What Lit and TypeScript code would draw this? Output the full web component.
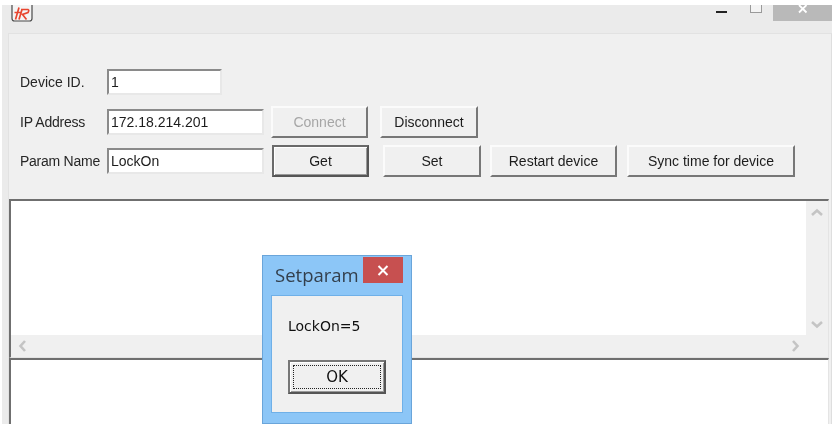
import { LitElement, html, css, svg } from "lit";
import { customElement } from "lit/decorators.js";

const chevron = (d: string) => svg`<svg class="chev" width="14" height="14" viewBox="0 0 14 14"><path d=${d} fill="none" stroke="#c4c4c4" stroke-width="2.6"/></svg>`;

@customElement("app-root")
export class AppRoot extends LitElement {
  static styles = css`
    :host { display: block; width: 840px; height: 435px; background: #fff; position: relative; overflow: hidden;
      font-family: "Liberation Sans", Arial, sans-serif; font-size: 14px; color: #222; }
    .window { margin: 5px 8px 0 2px; height: 419px; background: #ebebeb; display: flex; flex-direction: column; filter: blur(0.4px); }
    .titlebar { height: 28px; flex: none; display: flex; align-items: flex-start; box-sizing: border-box; padding-left: 9px; }
    .logo { flex: none; }
    .spacer { flex: 1; }
    .min { width: 11px; height: 2px; background: #222; margin-top: 6px; margin-right: 23px; }
    .max { width: 12px; height: 8px; box-sizing: border-box; border: 1px solid #9a9a9a; border-top: 0; background: #f4f4f4; margin-right: 11px; }
    .close { width: 59px; height: 16px; background: #b9b9b9; display: flex; justify-content: center; align-items: flex-start; }
    .panel { margin-left: 6px; flex: 1; min-height: 0; background: #f0f0f0; border: 1px solid #e2e2e2; border-right-color: #dedede; border-bottom: 0; display: flex; flex-direction: column; padding-top: 35px; box-sizing: border-box; }
    .form { padding: 0 0 0 11px; display: flex; flex-direction: column; gap: 7px; height: 108px; flex: none; }
    .row { display: flex; align-items: center; height: 32px; flex: none; }
    .row.first { height: 26px; margin-bottom: 4px; }
    .label { width: 87px; flex: none; color: #262626; white-space: nowrap; font-size: 14px; }
    .tight { letter-spacing: -0.25px; }
    .input { box-sizing: border-box; height: 26px; background: #fff; border: 2px solid #e8e8e8; border-top-color: #8a8a8a; border-left-color: #8a8a8a; padding-left: 2px; line-height: 22px; color: #1c1c1c; font-size: 14px; }
    .w115 { width: 115px; }
    .w157 { width: 157px; }
    .btn { box-sizing: border-box; height: 32px; flex: none; background: #f0f0f0; border: 2px solid; border-color: #fbfbfb #777 #777 #fbfbfb; display: flex; align-items: center; justify-content: center; color: #1c1c1c; font-size: 14px; }
    .btn.disabled { color: #a6a6a6; }
    .btn.default { border-color: #6a6a6a #555 #555 #6a6a6a; box-shadow: inset 1px 1px 0 #fff, inset -1px -1px 0 #999; }
    .ml-7 { margin-left: 7px; }
    .ml-8 { margin-left: 8px; }
    .ml-9 { margin-left: 9px; }
    .ml-10 { margin-left: 10px; }
    .ml-12 { margin-left: 12px; }
    .ml-14 { margin-left: 14px; }
    .w97 { width: 97px; }
    .w98 { width: 98px; }
    .w127 { width: 127px; }
    .w168 { width: 168px; }
    .area { margin: 0 2px 0 0; box-sizing: border-box; border-top: 2px solid #6f6f6f; border-left: 2px solid #6f6f6f; border-right: 1px solid #e4e4e4; border-bottom: 1px solid #e4e4e4; background: #fff; }
    .area.one { height: 159px; display: grid; grid-template-columns: 1fr 22px; grid-template-rows: 1fr 22px; background: #f0f0f0; margin-top: 22px; flex: none; }
    .area.two { flex: 1; border-bottom: 0; }
    .content { background: #fff; }
    .vbar { display: flex; flex-direction: column; justify-content: space-between; align-items: center; padding: 5px 0 4px; }
    .hbar { display: flex; justify-content: space-between; align-items: center; padding: 0 26px 0 5px; grid-column: 1 / 3; }
    .chev { display: block; }
    .dialog { position: absolute; left: 262px; top: 255px; width: 150px; height: 169px; box-sizing: border-box; background: #8cc6f7; border: 1px solid #6aa5da; filter: blur(0.4px); display: flex; flex-direction: column; }
    .dtitle { height: 39px; flex: none; display: flex; justify-content: space-between; align-items: flex-start; }
    .dtext { font-family: "Open Sans", "Noto Sans", sans-serif; font-size: 18.5px; color: #333f4c; margin: 6px 0 0 12px; line-height: 26px; }
    .dclose { width: 40px; height: 26px; background: #c75050; margin: 1px 8px 0 0; display: flex; align-items: center; justify-content: center; }
    .dbody { margin: 0 8px 10px 8px; flex: 1; background: #f0f0f0; border: 1px solid #6fb0e8; display: flex; flex-direction: column; align-items: flex-start; }
    .msg { font-family: "DejaVu Sans", sans-serif; font-size: 14px; color: #101010; margin: 22px 0 0 16px; line-height: 16px; }
    .ok { box-sizing: border-box; width: 98px; height: 34px; margin: 26px 0 0 16px; background: #f0f0f0; border: 2px solid; border-color: #777 #555 #555 #777; box-shadow: inset 1px 1px 0 #fff, inset -1px -1px 0 #999; padding: 3px; display: flex; }
    .focus { flex: 1; border: 1.5px dotted #222; display: flex; align-items: center; justify-content: center; font-family: "DejaVu Sans", sans-serif; font-size: 15px; color: #101010; }
  `;

  render() {
    return html`
      <div class="window">
        <div class="titlebar">
          <svg class="logo" width="22" height="17" viewBox="0 0 22 17">
            <path d="M1 0V13.5Q1 16 3.5 16H18.5Q21 16 21 13.5V0" fill="#f4f4f4" stroke="#4a4a4a" stroke-width="1.2"/>
            <path d="M3.5 7.5H10M8 2.5L4.5 14.5M10 4.5H17Q18.5 5 17 7.5L11.5 9.5L15.5 14.5M11 4.5L8 14.5" fill="none" stroke="#e8452f" stroke-width="1.7"/>
          </svg>
          <div class="spacer"></div>
          <div class="min"></div>
          <div class="max"></div>
          <div class="close">
            <svg width="12" height="10" viewBox="0 0 12 10"><path d="M2 0L9.5 7.5M9.5 0L2 7.5" stroke="#fff" stroke-width="1.8"/></svg>
          </div>
        </div>
        <div class="panel">
          <div class="form">
            <div class="row first">
              <div class="label">Device ID.</div>
              <div class="input w115">1</div>
            </div>
            <div class="row">
              <div class="label tight">IP Address</div>
              <div class="input w157">172.18.214.201</div>
              <div class="btn disabled w97 ml-7">Connect</div>
              <div class="btn w98 ml-12">Disconnect</div>
            </div>
            <div class="row">
              <div class="label tight">Param Name</div>
              <div class="input w157">LockOn</div>
              <div class="btn default w97 ml-8">Get</div>
              <div class="btn w98 ml-14">Set</div>
              <div class="btn w127 ml-9">Restart device</div>
              <div class="btn w168 ml-10">Sync time for device</div>
            </div>
          </div>
          <div class="area one">
            <div class="content"></div>
            <div class="vbar">
              ${chevron("M2 9L7 4.5L12 9")}
              ${chevron("M2 5L7 9.5L12 5")}
            </div>
            <div class="hbar">
              ${chevron("M9 2L4.5 7L9 12")}
              ${chevron("M5 2L9.5 7L5 12")}
            </div>
          </div>
          <div class="area two"></div>
        </div>
      </div>
      <div class="dialog">
        <div class="dtitle">
          <div class="dtext">Setparam</div>
          <div class="dclose">
            <svg width="12" height="11" viewBox="0 0 12 11"><path d="M1.5 1L10.5 10M10.5 1L1.5 10" stroke="#fff" stroke-width="2"/></svg>
          </div>
        </div>
        <div class="dbody">
          <div class="msg">LockOn=5</div>
          <div class="ok"><div class="focus">OK</div></div>
        </div>
      </div>
    `;
  }
}
